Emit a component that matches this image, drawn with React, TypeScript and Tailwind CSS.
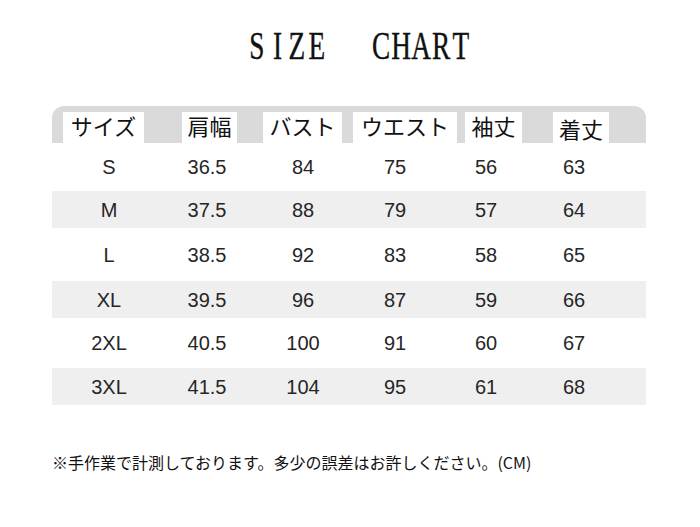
import React from 'react';

const rows = [
  { size: 'S', cells: ['36.5', '84', '75', '56', '63'], h: 'h-[48px]', bg: 'bg-white' },
  { size: 'M', cells: ['37.5', '88', '79', '57', '64'], h: 'h-[37px]', bg: 'bg-[#efefef]' },
  { size: 'L', cells: ['38.5', '92', '83', '58', '65'], h: 'h-[53px]', bg: 'bg-white' },
  { size: 'XL', cells: ['39.5', '96', '87', '59', '66'], h: 'h-[37px]', bg: 'bg-[#efefef]' },
  { size: '2XL', cells: ['40.5', '100', '91', '60', '67'], h: 'h-[50px]', bg: 'bg-white' },
  { size: '3XL', cells: ['41.5', '104', '95', '61', '68'], h: 'h-[37px]', bg: 'bg-[#efefef]' },
];

// header labels sit in white boxes, not on the column grid
const headers = [
  { label: 'サイズ', cls: 'w-[81px]' },
  { label: '肩幅', cls: 'w-[55px] ml-[38px]' },
  { label: 'バスト', cls: 'w-[79px] ml-[26px]' },
  { label: 'ウエスト', cls: 'w-[104px] ml-[11px]' },
  { label: '袖丈', cls: 'w-[57px] ml-[8px]' },
  { label: '着丈', cls: 'w-[56px] ml-[31px] pt-[3px]' },
];

const Letters = ({ text }: { text: string }) => (
  <div className="flex">
    {text.split('').map((ch, i) => (
      <span key={i} className="w-[20px] flex justify-center">
        <span className="inline-block scale-x-[0.7]">{ch}</span>
      </span>
    ))}
  </div>
);

export default function App() {
  return (
    <div className="w-[700px] h-[527px] bg-white overflow-hidden">
      {/* title */}
      <div
        className="flex pl-[247px] pt-[26px] text-[39px] leading-none h-[65px] text-[#111] [-webkit-text-stroke:0.4px_#111]"
        style={{ fontFamily: '"Liberation Serif", serif' }}
      >
        <Letters text="SIZE" />
        <div className="w-[44px]" />
        <Letters text="CHART" />
      </div>

      {/* table */}
      <div className="mt-[41px] ml-[52px] w-[594px]">
        <div
          className="h-[37px] bg-[#dadada] rounded-t-[12px] flex items-end pl-[11px] text-[22px] text-[#111]"
          style={{ fontFamily: '"Noto Sans CJK JP", sans-serif' }}
        >
          {headers.map((h) => (
            <div key={h.label} className={`h-[31px] bg-white text-center leading-[27px] ${h.cls}`}>
              {h.label}
            </div>
          ))}
        </div>

        {rows.map((r) => (
          <div
            key={r.size}
            className={`grid grid-cols-[114px_82px_110px_74px_108px_68px_1fr] items-center text-[20px] text-[#262626] ${r.h} ${r.bg}`}
            style={{ fontFamily: '"Liberation Sans", Arial, sans-serif' }}
          >
            <div className="text-center">{r.size}</div>
            {r.cells.map((c, i) => (
              <div key={i} className="text-center">
                {c}
              </div>
            ))}
            <div />
          </div>
        ))}
      </div>

      {/* note */}
      <div
        className="mt-[46px] ml-[52px] text-[16px] leading-[23px] text-[#111] whitespace-nowrap"
        style={{ fontFamily: '"Noto Sans CJK JP", sans-serif' }}
      >
        ※手作業で計測しております。多少の誤差はお許しください。(CM)
      </div>
    </div>
  );
}
